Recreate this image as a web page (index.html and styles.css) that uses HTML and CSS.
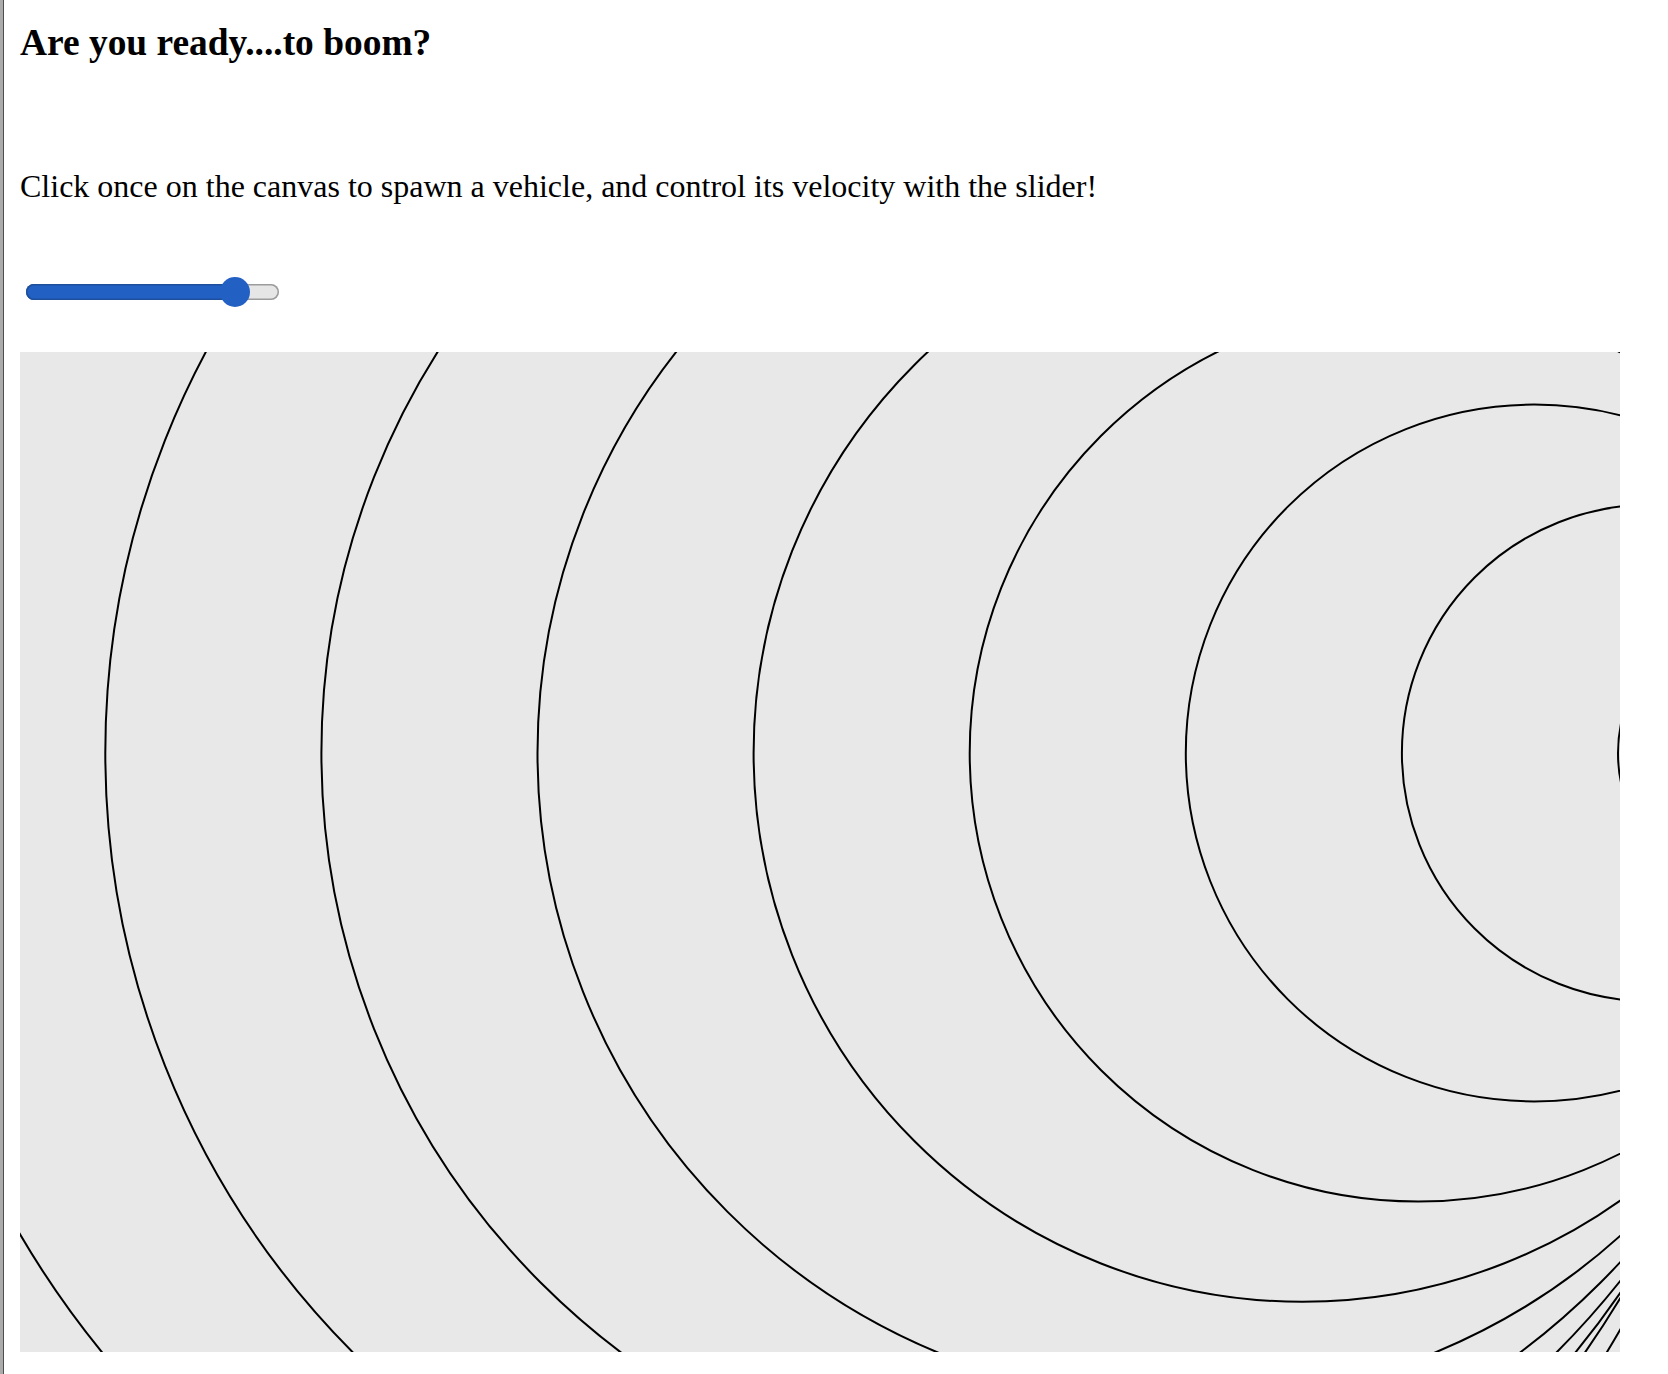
FILE: index.html
```html
<!DOCTYPE html>
<html lang="en">
<head>
<meta charset="utf-8">
<title>Are you ready....to boom?</title>
<link rel="stylesheet" href="styles.css">
</head>
<body>
<div class="frame">
  <main class="page">
    <h3 class="title">Are you ready....to boom?</h3>
    <p class="intro">Click once on the canvas to spawn a vehicle, and control its velocity with the slider!</p>
    <div class="slider" role="slider" aria-valuemin="0" aria-valuemax="100" aria-valuenow="87">
      <div class="track"><div class="fill" style="width:223px"></div></div>
      <div class="thumb" style="left:193.5px"></div>
    </div>
    <svg class="stage" width="1600" height="1000" viewBox="0 0 1600 1000" xmlns="http://www.w3.org/2000/svg">
      <g fill="none" stroke="#000" stroke-width="2">
        <circle cx="1746" cy="401" r="148"/>
        <circle cx="1630.1" cy="401" r="248.2"/>
        <circle cx="1514.2" cy="401" r="348.4"/>
        <circle cx="1398.3" cy="401" r="448.6"/>
        <circle cx="1282.4" cy="401" r="548.8"/>
        <circle cx="1166.5" cy="401" r="649"/>
        <circle cx="1050.6" cy="401" r="749.2"/>
        <circle cx="934.7" cy="401" r="849.4"/>
        <circle cx="818.8" cy="401" r="949.6"/>
        <circle cx="702.9" cy="401" r="1049.8"/>
        <circle cx="598.4" cy="401" r="1155.9"/>
      </g>
    </svg>
  </main>
</div>
</body>
</html>
```

FILE: styles.css
```css
html, body {
  margin: 0;
  padding: 0;
  height: 100%;
  overflow: hidden;
  background: #fff;
}

.frame {
  display: flex;
  min-height: 1374px;
  border-left: 3px solid #ababab;
}

.page {
  flex: 1;
  border-left: 1px solid #4d4d4d;
  padding: 21px 0 0 16px;
  font-family: "Liberation Serif", "Times New Roman", serif;
  color: #000;
}

.title {
  margin: 0;
  font-size: 37.44px;
  line-height: 43px;
  font-weight: bold;
}

.intro {
  margin: 104px 0 0;
  font-size: 32px;
  line-height: 37px;
}

.slider {
  position: relative;
  margin: 72px 0 0 6px;
  width: 253px;
  height: 30px;
  display: flex;
  align-items: center;
}

.track {
  width: 100%;
  height: 16px;
  border-radius: 8px;
  background: #e6e6e6;
  box-shadow: inset 0 0 0 1.5px #9c9c9c;
}

.fill {
  height: 16px;
  border-radius: 8px;
  background: #2360c4;
  box-shadow: inset 0 0 0 1.5px #1e4f9c;
}

.thumb {
  position: absolute;
  top: 0;
  width: 30px;
  height: 30px;
  border-radius: 50%;
  background: #2360c4;
}

.stage {
  display: block;
  margin-top: 45px;
  background: #e8e8e8;
}
```
